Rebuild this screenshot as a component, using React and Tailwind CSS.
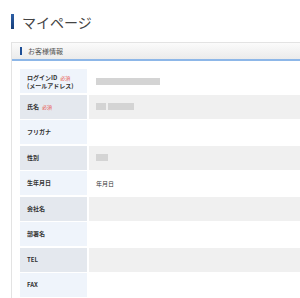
const rows = [
  { label: 'ログインID', sub: '(メールアドレス)', required: true, blurs: ['w-[64px]'] },
  { label: '氏名', required: true, blurs: ['w-[10px]', 'w-[26px]'] },
  { label: 'フリガナ' },
  { label: '性別', blurs: ['w-[12px]'] },
  { label: '生年月日', value: '年月日' },
  { label: '会社名' },
  { label: '部署名' },
  { label: 'TEL' },
  { label: 'FAX' },
  { label: '' }
];

function Row({ row, index }) {
  const odd = index % 2 === 0;
  return (
    <div className="flex gap-[2px] h-[24px]">
      <div className={`w-[67px] shrink-0 flex flex-col justify-center pl-[7px] ${odd ? 'bg-[#eff4fb]' : 'bg-[#e4e8ee]'}`}>
        <div className="flex items-center gap-[3px] text-[6px] leading-[8px] font-bold text-[#333]">
          <span>{row.label}</span>
          {row.required && <span className="text-[5px] font-normal text-[#e8554f]">必須</span>}
        </div>
        {row.sub && <div className="text-[6px] leading-[7px] font-bold text-[#333]">{row.sub}</div>}
      </div>
      <div className={`flex-1 flex items-center gap-[2px] pl-[7px] ${odd ? 'bg-white' : 'bg-[#f0f0f0]'}`}>
        {row.value && <span className="text-[6px] text-[#333]">{row.value}</span>}
        {row.blurs && row.blurs.map((w, i) => (
          <div key={i} className={`${w} h-[7px] bg-[#d4d4d4] blur-[0.6px]`} />
        ))}
      </div>
    </div>
  );
}

export default function App() {
  return (
    <div className="w-[300px] h-[298px] overflow-hidden bg-white" style={{ fontFamily: '"Noto Sans CJK JP", "Noto Sans", sans-serif' }}>
      <div className="flex items-center gap-[8px] pl-[11px] pt-[13px] h-[30px]">
        <div className="w-[3px] h-[15px] bg-gradient-to-b from-[#2d5fa6] to-[#173f7a]" />
        <h1 className="text-[14px] leading-[16px] text-[#444]">マイページ</h1>
      </div>
      <div className="ml-[11px] mt-[12px] border-l border-t border-[#e3e3e3] w-[300px]">
        <div className="h-[18px] flex items-center gap-[6px] pl-[8px] bg-gradient-to-b from-[#fbfbfb] to-[#ebebeb] border-b-2 border-[#8db7e8]">
          <div className="w-[2px] h-[8px] bg-[#1f4f96]" />
          <span className="text-[7px] text-[#555]">お客様情報</span>
        </div>
        <div className="pl-[8px] pt-[8px] flex flex-col gap-[1.5px]">
          {rows.map((row, i) => (
            <Row key={i} row={row} index={i} />
          ))}
        </div>
      </div>
    </div>
  );
}
